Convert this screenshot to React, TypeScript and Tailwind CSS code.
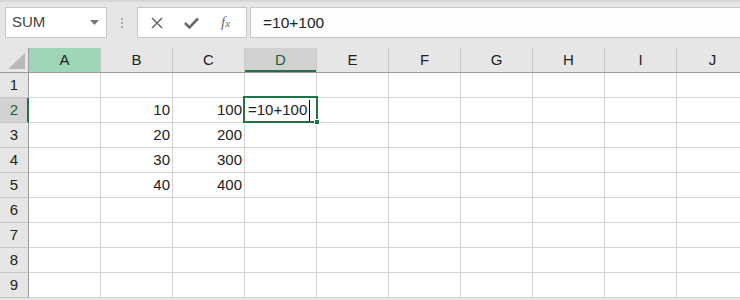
import React from 'react';

const cols = ['A', 'B', 'C', 'D', 'E', 'F', 'G', 'H', 'I', 'J'];
const rows: Record<number, Record<string, string>> = {
  2: { B: '10', C: '100' },
  3: { B: '20', C: '200' },
  4: { B: '30', C: '300' },
  5: { B: '40', C: '400' },
};

function ColHeader({ c }: { c: string }) {
  let cls = 'bg-[#e6e6e6] text-[#222]';
  if (c === 'A') cls = 'bg-[#9fd5b7] text-[#222]';
  if (c === 'D') cls = 'bg-[#d2d2d2] text-[#1d5f3a] shadow-[inset_0_-2px_0_#217346]';
  return (
    <div className={`w-[72px] shrink-0 h-full border-r border-[#c8c8c8] flex items-center justify-center ${cls}`}>
      {c}
    </div>
  );
}

export default function App() {
  return (
    <div className="w-[740px] h-[300px] overflow-hidden bg-[#e6e6e6] text-[15px] font-['Liberation_Sans',Arial,sans-serif] text-[#222]">
      {/* toolbar */}
      <div className="h-[48px] flex items-start pt-[7px] pl-[5px] border-t-2 border-[#d6d6d6]">
        <div className="w-[102px] h-[31px] -mt-[2px] bg-white border border-[#c6c6c6] flex items-center justify-between pl-[6px] pr-[7px] text-[#444]">
          <span>SUM</span>
          <svg width="9" height="5" viewBox="0 0 9 5">
            <path d="M0 0h9L4.5 5z" fill="#777" />
          </svg>
        </div>
        <div className="w-[30px] h-[31px] -mt-[2px] flex flex-col items-center justify-center gap-[2px]">
          <span className="w-[2px] h-[2px] bg-[#aaa]" />
          <span className="w-[2px] h-[2px] bg-[#aaa]" />
          <span className="w-[2px] h-[2px] bg-[#aaa]" />
        </div>
        <div className="w-[110px] h-[31px] -mt-[2px] bg-white border border-[#c6c6c6] flex items-center pl-[13px]">
          <svg width="12" height="12" viewBox="0 0 12 12">
            <path d="M1 1l10 10M11 1L1 11" stroke="#6b6b6b" strokeWidth="1.6" />
          </svg>
          <svg width="15" height="12" viewBox="0 0 15 12" className="ml-[21px]">
            <path d="M1 6l4.5 4.5L14 1.5" stroke="#6b6b6b" strokeWidth="2.6" fill="none" />
          </svg>
          <span className="ml-[22px] font-['Liberation_Serif',serif] italic text-[15px] text-[#6b6b6b] leading-none">
            f<span className="text-[11px]">x</span>
          </span>
        </div>
        <div className="flex-1 h-[31px] -mt-[2px] ml-[3px] bg-[#fdfdfd] border border-[#c6c6c6] border-r-0 flex items-center pl-[12px] text-[15.5px]">
          =10+100
        </div>
      </div>

      {/* column headers */}
      <div className="flex h-[25px] border-b border-[#9b9b9b]">
        <div className="w-[29px] shrink-0 h-full border-r border-[#9b9b9b] flex items-end justify-end pr-[3px] pb-[3px]">
          <svg width="17" height="16" viewBox="0 0 17 16">
            <path d="M17 0V16H0z" fill="#b9b9b9" />
          </svg>
        </div>
        {cols.map((c) => (
          <ColHeader key={c} c={c} />
        ))}
      </div>

      {/* rows */}
      <div className="relative">
        {[1, 2, 3, 4, 5, 6, 7, 8, 9].map((r) => (
          <div key={r} className="flex h-[25px]">
            <div
              className={`w-[29px] shrink-0 h-full border-r border-b flex items-center justify-center ${
                r === 2
                  ? 'bg-[#d2d2d2] border-b-[#c8c8c8] border-r-[#217346] border-r-2 text-[#1d5f3a] pl-[1px]'
                  : 'bg-[#e6e6e6] border-b-[#c8c8c8] border-r-[#9b9b9b]'
              }`}
            >
              {r}
            </div>
            {cols.map((c) => (
              <div
                key={c}
                className="w-[72px] shrink-0 h-full bg-white border-r border-b border-[#d4d4d4] flex items-center justify-end pr-[2px] pt-[1px]"
              >
                {rows[r]?.[c]}
              </div>
            ))}
          </div>
        ))}

        {/* selected cell D2 */}
        <div className="absolute left-[243px] top-[23px] w-[75px] h-[27px] border-2 border-[#217346] flex items-center pl-[3px] pt-[1px] text-[15px]">
          <span>=10+100</span>
          <span className="ml-[2px] w-px h-[21px] bg-black" />
          <span className="absolute -right-[4px] -bottom-[4px] w-[6px] h-[6px] bg-[#217346] border border-white" />
        </div>
      </div>
    </div>
  );
}
